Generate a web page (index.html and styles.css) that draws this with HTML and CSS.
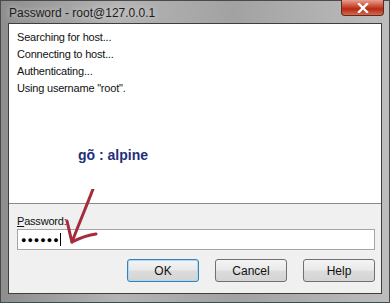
FILE: index.html
```html
<!DOCTYPE html>
<html lang="en">
<head>
    <meta charset="UTF-8">
    <meta name="viewport" content="width=device-width, initial-scale=1.0">
    <title>Password - root@127.0.0.1</title>
    <link rel="stylesheet" href="styles.css">
</head>
<body>
    <div class="window">
        <div class="titlebar">
            <span class="title">Password - root@127.0.0.1</span>
            <div class="close-btn">
                <svg width="14" height="10" viewBox="0 0 14 10">
                    <path d="M3 1 L11 9 M11 1 L3 9" stroke="#fff" stroke-width="2.4" stroke-linecap="square"/>
                </svg>
            </div>
        </div>
        <div class="client">
            <div class="log">
                <div class="log-line">Searching for host...</div>
                <div class="log-line">Connecting to host...</div>
                <div class="log-line">Authenticating...</div>
                <div class="log-line">Using username "root".</div>
                <div class="note">gõ : alpine</div>
            </div>
            <div class="form">
                <label class="label"><u>P</u>assword:</label>
                <div class="input">
                    <span class="dots">●●●●●●</span><span class="caret"></span>
                </div>
                <div class="buttons">
                    <button class="btn btn-default">OK</button>
                    <button class="btn">Cancel</button>
                    <button class="btn">Help</button>
                </div>
            </div>
        </div>
        <svg class="arrow" width="60" height="70" viewBox="0 0 60 70">
            <path d="M40 0 C34 16 27 32 19 53" stroke="#a62c3c" stroke-width="3" fill="none" stroke-linecap="round"/>
            <path d="M14 32 C16 40 17 46 19 53 C27 49 35 46 43 45" stroke="#a62c3c" stroke-width="3" fill="none" stroke-linecap="round" stroke-linejoin="round"/>
        </svg>
    </div>
</body>
</html>
```

FILE: styles.css
```css
body {
    margin: 0;
    font-family: "Liberation Sans", Arial, sans-serif;
}
.window {
    position: relative;
    width: 390px;
    height: 303px;
    box-sizing: border-box;
    padding: 0 7px 8px 7px;
    background: linear-gradient(to right, #8e8e8e, #b4b4b4 30%, #a2a2a2 60%, #bdbdbd);
    border: 1px solid #4a4a4a;
    border-bottom-color: #3b4d52;
    display: flex;
    flex-direction: column;
}
.titlebar {
    height: 22px;
    display: flex;
    justify-content: space-between;
    align-items: flex-start;
}
.title {
    margin: 5px 0 0 1px;
    font-size: 12px;
    color: #1c1c1c;
    text-shadow: 0 0 6px rgba(255, 255, 255, 0.7);
}
.close-btn {
    width: 41px;
    height: 15px;
    margin: -1px -2px 0 0;
    border: 1px solid #5a2b22;
    border-top: none;
    border-radius: 0 0 4px 4px;
    background: linear-gradient(to bottom, #e8a090, #c9452f 45%, #b42a14 60%, #d66a4e);
    display: flex;
    justify-content: center;
    align-items: center;
}
.client {
    flex: 1;
    display: flex;
    flex-direction: column;
    border: 1px solid #3e3e3e;
    background: #f0f0f0;
}
.log {
    height: 180px;
    background: #fff;
    border-bottom: 1px solid #8a8a8a;
    padding: 5px 0 0 8px;
    box-sizing: border-box;
}
.log-line {
    font-size: 11px;
    letter-spacing: -0.2px;
    line-height: 17px;
    color: #111;
}
.note {
    margin: 50px 0 0 61px;
    font-size: 14px;
    font-weight: bold;
    color: #1f2e7c;
}
.form {
    padding: 10px 6px 0 8px;
}
.label {
    display: block;
    font-size: 11px;
    letter-spacing: -0.2px;
    color: #111;
    line-height: 14px;
}
.input {
    height: 19px;
    margin-top: 1px;
    border: 1px solid #a5a5a5;
    background: #fff;
    display: flex;
    align-items: center;
    padding-left: 3px;
}
.dots {
    font-size: 9px;
    letter-spacing: 1px;
    color: #000;
}
.caret {
    width: 1px;
    height: 13px;
    background: #000;
    margin-left: 0;
}
.buttons {
    display: flex;
    justify-content: flex-end;
    gap: 16px;
    margin-top: 9px;
}
.btn {
    width: 72px;
    height: 23px;
    border: 1px solid #707070;
    border-radius: 3px;
    background: linear-gradient(to bottom, #f4f4f4, #e9e9e9 48%, #dcdcdc 52%, #d4d4d4);
    font-family: "Liberation Sans", Arial, sans-serif;
    font-size: 12px;
    color: #111;
    padding: 0;
}
.btn-default {
    border-color: #3c7fb1;
    box-shadow: inset 0 0 0 1px #a8dbf5;
}
.arrow {
    position: absolute;
    left: 52px;
    top: 188px;
}
```
